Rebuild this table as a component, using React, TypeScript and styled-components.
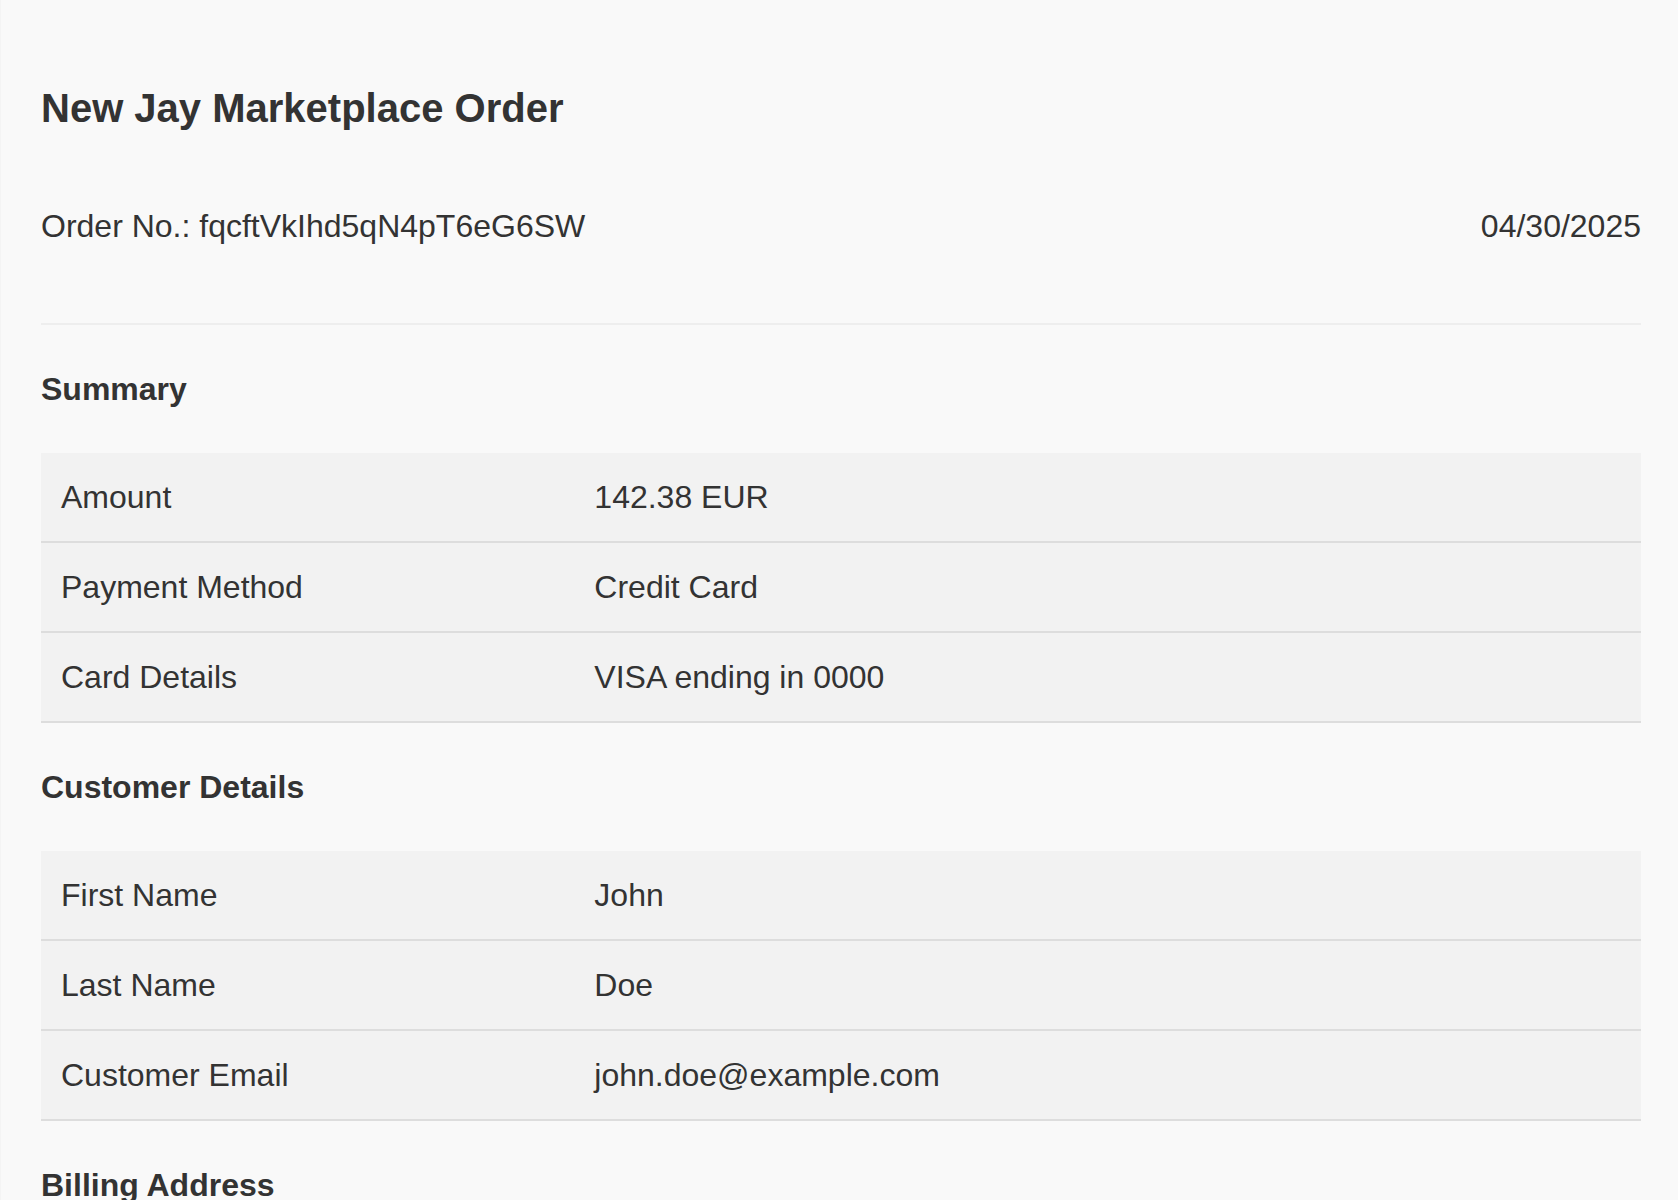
import styled, { createGlobalStyle } from 'styled-components';

interface Field {
  readonly label: string;
  readonly value: string;
}

const summary: Field[] = [
  { label: 'Amount', value: '142.38 EUR' },
  { label: 'Payment Method', value: 'Credit Card' },
  { label: 'Card Details', value: 'VISA ending in 0000' },
];

const customer: Field[] = [
  { label: 'First Name', value: 'John' },
  { label: 'Last Name', value: 'Doe' },
  { label: 'Customer Email', value: 'john.doe@example.com' },
];

const GlobalStyle = createGlobalStyle`
  html, body {
    margin: 0;
    background: #f9f9f9;
  }
  body {
    font-family: "Liberation Sans", Arial, Helvetica, sans-serif;
    color: #333333;
  }
`;

function DetailsTable({ rows }: { rows: Field[] }) {
  return (
    <Table>
      {rows.map((row) => (
        <Row key={row.label}>
          <Cell>{row.label}</Cell>
          <Cell>{row.value}</Cell>
        </Row>
      ))}
    </Table>
  );
}

export default function App() {
  return (
    <>
      <GlobalStyle />
      <Page>
        <Title>New Jay Marketplace Order</Title>
        <OrderMeta>
          <span>Order No.: fqcftVkIhd5qN4pT6eG6SW</span>
          <span>04/30/2025</span>
        </OrderMeta>

        <SectionTitle>Summary</SectionTitle>
        <DetailsTable rows={summary} />

        <SectionTitle>Customer Details</SectionTitle>
        <DetailsTable rows={customer} />

        <SectionTitle>Billing Address</SectionTitle>
      </Page>
    </>
  );
}

const Page = styled.main`
  padding: 85px 37px 40px 40px;
  min-height: 100vh;
  box-sizing: border-box;
  border-left: 1px solid #f4f4f4;
`;

const Title = styled.h1`
  margin: 0;
  font-size: 40px;
  line-height: 46px;
  font-weight: 700;
  color: #333333;
`;

const OrderMeta = styled.div`
  display: flex;
  justify-content: space-between;
  margin-top: 77px;
  padding-bottom: 78px;
  border-bottom: 2px solid #eeeeee;
  font-size: 32px;
  line-height: 37px;
`;

const SectionTitle = styled.h2`
  margin: 46px 0 45px;
  font-size: 32px;
  line-height: 37px;
  font-weight: 700;
  color: #333333;
`;

const Table = styled.div`
  display: flex;
  flex-direction: column;
`;

const Row = styled.div`
  display: grid;
  grid-template-columns: 1fr 2fr;
  align-items: center;
  height: 90px;
  box-sizing: border-box;
  background: #f2f2f2;
  border-bottom: 2px solid #dddddd;
`;

const Cell = styled.div`
  padding: 0 20px;
  font-size: 32px;
  line-height: 37px;
`;
